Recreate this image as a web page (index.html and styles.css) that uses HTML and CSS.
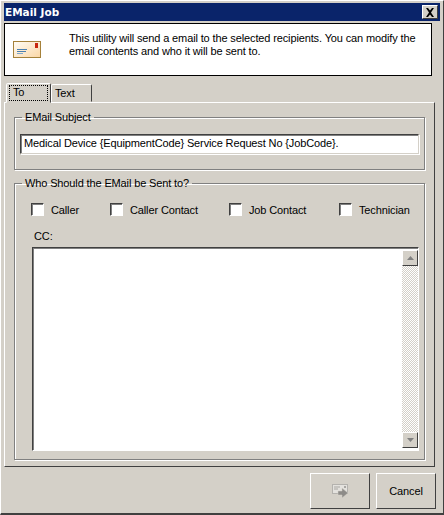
FILE: index.html
```html
<!DOCTYPE html>
<html lang="en">
<head>
<meta charset="utf-8">
<title>EMail Job</title>
<link rel="stylesheet" href="styles.css">
</head>
<body>
<div class="window">
  <div class="titlebar">
    <span class="title">EMail Job</span>
    <span class="close"><svg width="10" height="9" viewBox="0 0 10 9"><path d="M1 0h2l2 2.500 2-2.500h2L6 4.500 9 9H7L5 6.500 3 9H1l3-4.500z" fill="#000"/></svg></span>
  </div>
  <div class="banner">
    <svg class="envelope" width="28" height="17" viewBox="0 0 28 17">
      <defs><linearGradient id="env" x1="0" y1="0" x2="1" y2="1"><stop offset="0" stop-color="#fffdf8"/><stop offset="1" stop-color="#fbd6a4"/></linearGradient></defs>
      <rect x=".5" y=".5" width="27" height="16" fill="url(#env)" stroke="#a5813a"/>
      <rect x="22" y="2" width="3" height="5" fill="#c8260f"/>
      <path d="M4 8.500h10M4 10.500h9" stroke="#4a7fb0"/>
      <path d="M4 12.500h6" stroke="#7ea7cb"/>
    </svg>
    <p class="banner-text">This utility will send a email to the selected recipients. You can modify the email contents and who it will be sent to.</p>
  </div>
  <div class="tabs">
    <div class="tab tab-active"><span class="tab-focus">To</span></div>
    <div class="tab">Text</div>
  </div>
  <div class="panel">
    <fieldset class="group group-subject">
      <legend>EMail Subject</legend>
      <div class="subject">Medical Device {EquipmentCode} Service Request No {JobCode}.</div>
    </fieldset>
    <fieldset class="group group-who">
      <legend>Who Should the EMail be Sent to?</legend>
      <div class="checks">
        <label class="check check-caller"><span class="box"></span>Caller</label>
        <label class="check check-contact"><span class="box"></span>Caller Contact</label>
        <label class="check check-job"><span class="box"></span>Job Contact</label>
        <label class="check"><span class="box"></span>Technician</label>
      </div>
      <div class="cc-label">CC:</div>
      <div class="cc">
        <div class="cc-body"></div>
        <div class="scrollbar">
          <span class="sb-btn"><svg width="7" height="4" viewBox="0 0 7 4"><path d="M3.500 0L7 4H0z" fill="#808080"/></svg></span>
          <span class="sb-track"></span>
          <span class="sb-btn"><svg width="7" height="4" viewBox="0 0 7 4"><path d="M0 0h7L3.500 4z" fill="#808080"/></svg></span>
        </div>
      </div>
    </fieldset>
  </div>
  <div class="footer">
    <button class="btn" type="button" aria-label="Send">
      <svg width="16" height="15" viewBox="0 0 16 15">
        <rect x=".5" y=".5" width="15" height="9" fill="#e4e2de" stroke="#b4b2ae"/>
        <path d="M2 3h6M2 5h4" stroke="#a8a6a2"/>
        <rect x="12" y="2" width="2" height="2" fill="#a8a6a2"/>
        <path d="M6 7h4V4l6 5-6 5v-3H6z" fill="#8d8b88" stroke="#d4d0c8" stroke-width=".5"/>
      </svg>
    </button>
    <button class="btn" type="button">Cancel</button>
  </div>
</div>
</body>
</html>
```
FILE: styles.css
```css
* { box-sizing: border-box; }
html, body { margin: 0; padding: 0; }
body {
  width: 444px;
  height: 515px;
  background: #d4d0c8;
  font-family: "Liberation Sans", Arial, sans-serif;
  font-size: 11px;
  letter-spacing: -0.13px;
  color: #000;
  overflow: hidden;
}
.window {
  width: 444px;
  height: 515px;
  padding: 3px 3px 0 3px;
  border-left: 1px solid #fff;
  border-top: 1px solid #fff;
  border-right: 1px solid #404040;
  border-bottom: 2px solid #404040;
  background: #d4d0c8;
  display: flex;
  flex-direction: column;
}
.titlebar {
  height: 18px;
  flex: none;
  background: #0a246a;
  display: flex;
  align-items: center;
  justify-content: space-between;
  padding: 0 2px 0 1px;
  margin-top: -1px;
}
.title {
  color: #fff;
  font-family: "DejaVu Sans", sans-serif;
  font-weight: bold;
  font-size: 10.5px;
  letter-spacing: 0;
}
.close {
  width: 16px;
  height: 14px;
  background: #d4d0c8;
  border: 1px solid;
  border-color: #fff #404040 #404040 #fff;
  display: flex;
  align-items: center;
  justify-content: center;
}
.banner {
  margin-top: 2px;
  width: 428px;
  height: 53px;
  flex: none;
  background: #fff;
  border: 1px solid #000;
  display: flex;
  align-items: flex-start;
  padding: 8px 6px 0 8px;
}
.envelope { margin: 9px 0 0 0; flex: none; }
.banner-text {
  margin: 0 0 0 28px;
  line-height: 13px;
  width: 350px;
}
.tabs {
  display: flex;
  align-items: flex-end;
  height: 26px;
  flex: none;
  padding-left: 2px;
  position: relative;
  z-index: 1;
}
.tab {
  height: 18px;
  width: 41px;
  background: #d4d0c8;
  border: 1px solid;
  border-color: #fff #404040 transparent #fff;
  border-radius: 2px 2px 0 0;
  padding-left: 3px;
  line-height: 16px;
}
.tab-active {
  height: 20px;
  width: 45px;
  margin-bottom: -1px;
  padding: 1px 2px;
}
.tab-focus {
  display: block;
  height: 16px;
  border: 1px dotted #000;
  padding-left: 3px;
  line-height: 12px;
}
.panel {
  width: 431px;
  height: 365px;
  flex: none;
  border: 1px solid;
  border-color: #fff #404040 #404040 #fff;
  padding: 8px 9px 0 9px;
}
.group {
  margin: 0;
  padding: 0;
  min-width: 0;
  border: 1px solid #808080;
  box-shadow: 1px 1px 0 #fff, inset 1px 1px 0 #fff;
  width: 411px;
}
.group legend {
  padding: 0 3px;
  margin-left: 7px;
  line-height: 13px;
}
.group-subject { height: 59px; }
.group-who { height: 283px; margin-top: 7px; }
.subject {
  margin: 10px 5px 0 5px;
  height: 20px;
  background: #fff;
  border: 1px solid;
  border-color: #404040 #d4d0c8 #d4d0c8 #404040;
  box-shadow: 1px 1px 0 #fff, inset 1px 1px 0 #808080;
  padding-left: 3px;
  line-height: 16px;
  white-space: nowrap;
}
.checks {
  display: flex;
  margin: 13px 0 0 16px;
  height: 13px;
}
.check { display: flex; align-items: flex-start; white-space: nowrap; line-height: 15px; }
.check-caller { width: 79px; }
.check-contact { width: 119px; }
.check-job { width: 110px; }
.box {
  width: 13px;
  height: 13px;
  flex: none;
  margin-right: 7px;
  background: #fff;
  border: 1px solid;
  border-color: #404040 #fff #fff #404040;
  box-shadow: inset 1px 1px 0 #808080;
}
.cc-label { margin: 14px 0 0 19px; line-height: 13px; }
.cc {
  display: flex;
  margin: 4px 0 0 17px;
  width: 387px;
  height: 204px;
  border: 1px solid;
  border-color: #404040 #fff #fff #404040;
  box-shadow: inset 1px 1px 0 #808080;
  background: #fff;
  padding: 2px 0 2px 2px;
}
.cc-body { flex: 1; }
.scrollbar {
  width: 16px;
  display: flex;
  flex-direction: column;
}
.sb-btn {
  height: 16px;
  flex: none;
  background: #d4d0c8;
  border: 1px solid;
  border-color: #fff #404040 #404040 #fff;
  display: flex;
  align-items: center;
  justify-content: center;
}
.sb-track {
  flex: 1;
  background: repeating-conic-gradient(#d4d0c8 0 25%, #fff 0 50%) 0 0 / 2px 2px;
}
.footer {
  display: flex;
  justify-content: flex-end;
  gap: 6px;
  margin-top: 6px;
  padding-right: 4px;
}
.btn {
  width: 60px;
  height: 36px;
  padding: 0;
  background: #d4d0c8;
  border: 1px solid;
  border-color: #fff #404040 #404040 #fff;
  font: inherit;
  letter-spacing: inherit;
  color: #000;
  display: flex;
  align-items: center;
  justify-content: center;
}
```
